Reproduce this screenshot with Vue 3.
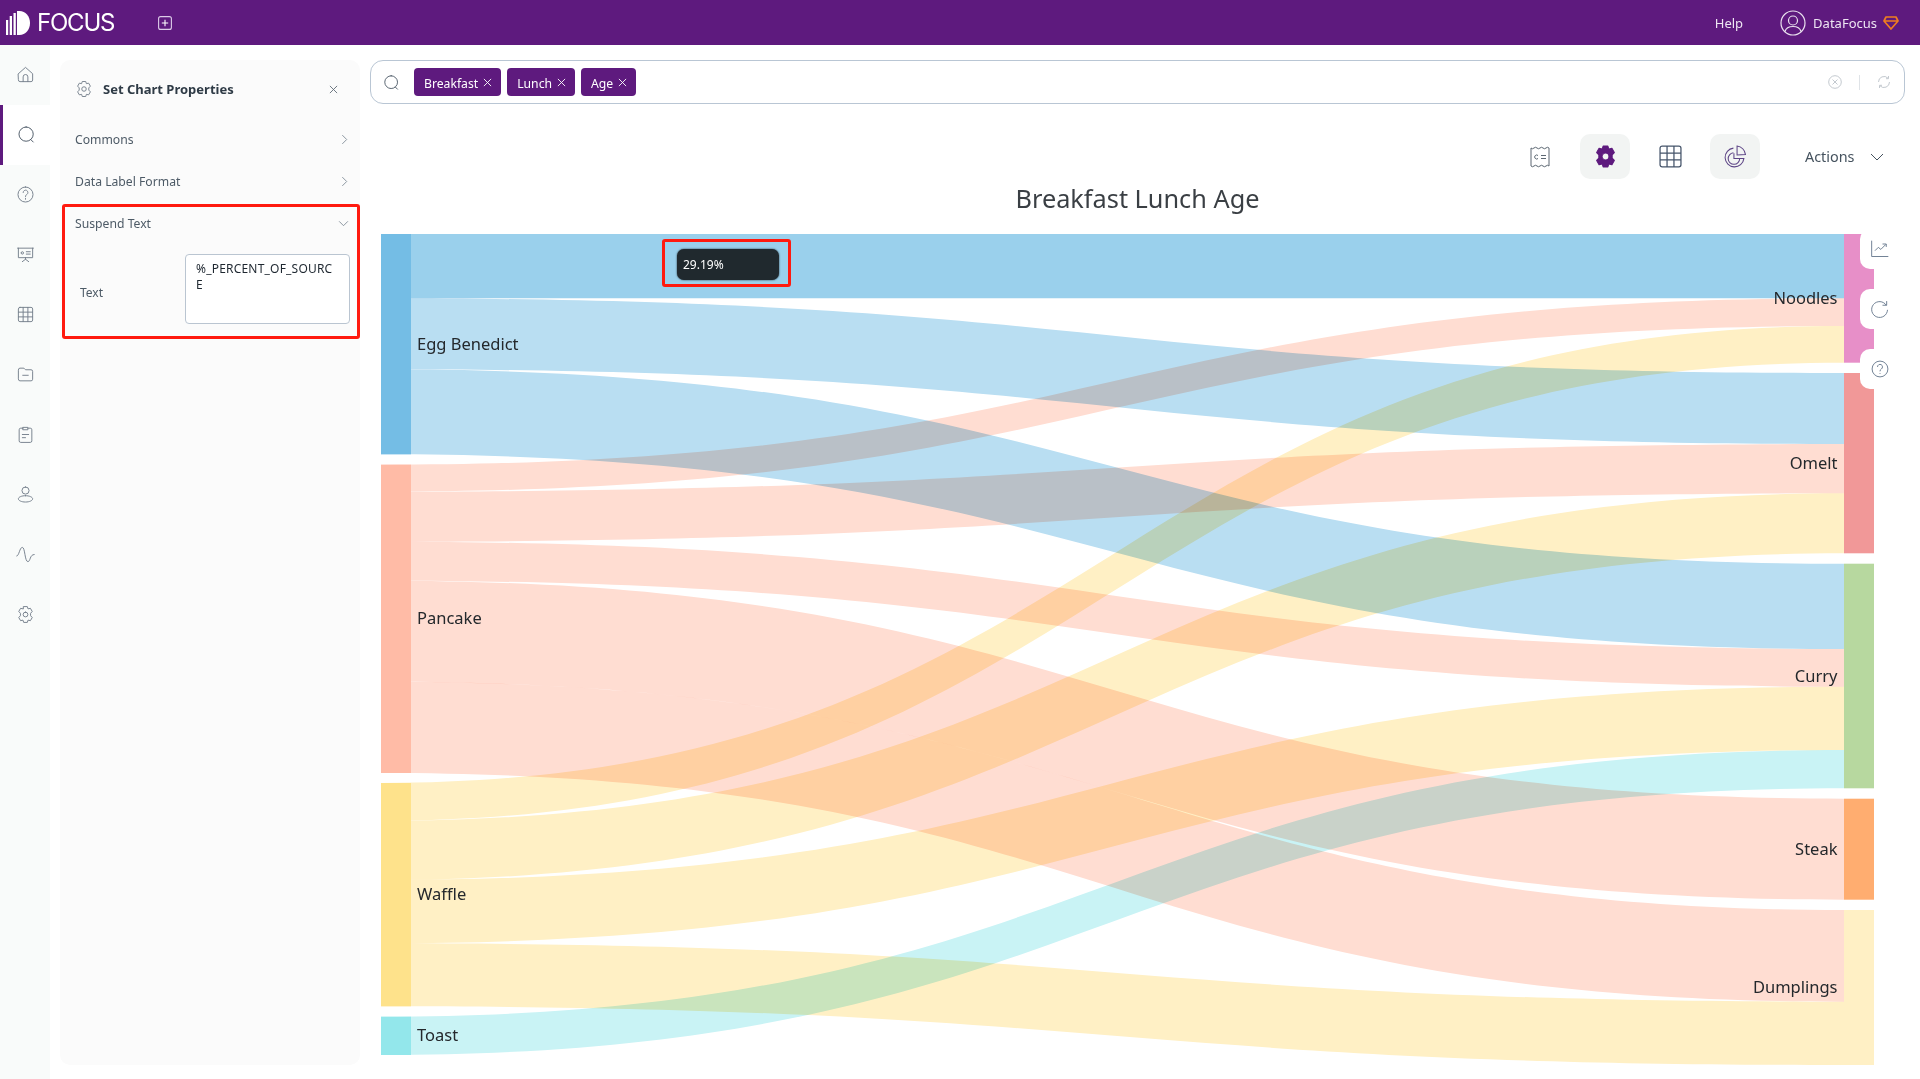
<script setup>
const X1 = 11
const X2 = 1474
const WIDTH = 1535
const TOP = 234

const colors = {
  egg: '#74bde5',
  eggLink: '#b9def2',
  pan: '#ffbba6',
  panLink: '#ffddd2',
  waf: '#fee28b',
  wafLink: '#fff0c5',
  toast: '#93e7eb',
  toastLink: '#c9f3f5'
}

const leftNodes = [
  { name: 'Egg Benedict', y0: 234, y1: 454.3, color: colors.egg },
  { name: 'Pancake', y0: 464.7, y1: 773, color: colors.pan },
  { name: 'Waffle', y0: 783, y1: 1006.3, color: colors.waf },
  { name: 'Toast', y0: 1016.7, y1: 1055, color: colors.toast }
]
const rightNodes = [
  { name: 'Noodles', y0: 234, y1: 362.7, color: '#e78fc8' },
  { name: 'Omelt', y0: 373, y1: 553.3, color: '#f19898' },
  { name: 'Curry', y0: 563.7, y1: 788.3, color: '#b7d89f' },
  { name: 'Steak', y0: 798.7, y1: 899.7, color: '#ffad70' },
  { name: 'Dumplings', y0: 910, y1: 1065, color: '#fff0c5' }
]

const MID = (X1 + X2) / 2

function linkPath([a0, a1, b0, b1]) {
  const s = [a0 - TOP, a1 - TOP, b0 - TOP, b1 - TOP]
  return `M${X1} ${s[0]}C${MID} ${s[0]} ${MID} ${s[2]} ${X2} ${s[2]}L${X2} ${s[3]}C${MID} ${s[3]} ${MID} ${s[1]} ${X1} ${s[1]}Z`
}

// The Pancake > Steak and Pancake > Dumplings ribbons touch until past the
// middle of the chart, so the top edge of the second one is sampled.
function hugPath([a0, a1, b0, b1], hugEnd) {
  const pts = []
  for (let i = 0; i <= 120; i++) {
    const t = i / 120
    const u = 1.5 * t * (1 - t) + t * t * t
    const s = 3 * t * t - 2 * t * t * t
    const q = Math.max(0, (s - 0.45) / 0.55)
    const y = a0 + (hugEnd - a0) * s + q * q * (b0 - hugEnd) - TOP
    pts.push(`${(X1 + (X2 - X1) * u).toFixed(1)} ${y.toFixed(2)}`)
  }
  return `M${pts.join('L')}L${X2} ${b1 - TOP}C${MID} ${b1 - TOP} ${MID} ${a1 - TOP} ${X1} ${a1 - TOP}Z`
}

const links = [
  { d: linkPath([234, 298.3, 234, 298.3]), fill: '#9ad0ec' },
  { d: linkPath([298.3, 369.3, 373, 444]), fill: colors.eggLink },
  { d: linkPath([369.3, 454.3, 563.7, 649]), fill: colors.eggLink },
  { d: linkPath([464.7, 491.7, 298.3, 326]), fill: colors.panLink },
  { d: linkPath([491.7, 541.7, 444, 493.3]), fill: colors.panLink },
  { d: linkPath([541.7, 580.7, 649, 686.7]), fill: colors.panLink },
  { d: linkPath([580.7, 681.7, 798.7, 899.7]), fill: colors.panLink },
  { d: hugPath([681.7, 773, 910, 1001.7], 899.7), fill: colors.panLink },
  { d: linkPath([783, 820.7, 326, 362.7]), fill: colors.wafLink },
  { d: linkPath([820.7, 880, 493.3, 553.3]), fill: colors.wafLink },
  { d: linkPath([880, 943.3, 686.7, 750]), fill: colors.wafLink },
  { d: linkPath([943.3, 1006.3, 1001.7, 1065]), fill: colors.wafLink },
  { d: linkPath([1016.7, 1055, 750, 788.3]), fill: colors.toastLink }
]

const gear = 'M9.7 2h4.6l.9 2.9 3-.7 2.3 4-2.1 2.3v3l2.1 2.3-2.3 4-3-.7-.9 2.9H9.7l-.9-2.9-3 .7-2.3-4 2.1-2.3v-3L3.500 8.200l2.300-4 3 .7z'

const navItems = [
  { d: 'M3 11 12 3l9 8v8a2 2 0 0 1-2 2H5a2 2 0 0 1-2-2zM9 21v-6a3 3 0 0 1 6 0v6' },
  { d: 'M11.500 2.500a9 9 0 1 0 0 18 9 9 0 0 0 0-18zM17.500 18.500l3 3', active: true },
  { d: 'M12 2.500a9.500 9.500 0 1 0 0 19 9.500 9.500 0 0 0 0-19zM9 9.500a3 3 0 1 1 4.600 2.500c-1 .7-1.600 1.300-1.600 2.800M12 17v1' },
  { d: 'M2 4h20M3 4v12h18V4M12 16v2M8 21l4-3 4 3M6.500 10a1.500 1.500 0 1 0 3 0 1.500 1.500 0 0 0-3 0M13 8.500h5M13 11.500h5' },
  { d: 'M5 3h14a2 2 0 0 1 2 2v14a2 2 0 0 1-2 2H5a2 2 0 0 1-2-2V5a2 2 0 0 1 2-2zM3 9h18M3 15h18M9 3v18M15 3v18' },
  { d: 'M3 6a2 2 0 0 1 2-2h5l2 2h7a2 2 0 0 1 2 2v10a2 2 0 0 1-2 2H5a2 2 0 0 1-2-2zM8.500 13h7' },
  { d: 'M9 4H6a2 2 0 0 0-2 2v14a2 2 0 0 0 2 2h12a2 2 0 0 0 2-2V6a2 2 0 0 0-2-2h-3M9 3h6v3H9zM8 12h8M8 16h4' },
  { d: 'M12 2.500a4.500 4.500 0 1 0 0 9 4.500 4.500 0 0 0 0-9zM12 13.500c-5 0-9 1.800-9 4s4 4 9 4 9-1.800 9-4-4-4-9-4z' },
  { d: 'M1 14c3 0 3.500-11 7-11s3 18 7 18c3.500 0 2-9 8-9' },
  { d: gear + 'M12 9a3 3 0 1 0 0 6 3 3 0 0 0 0-6z' }
]

const sections = ['Commons', 'Data Label Format']
const tags = ['Breakfast', 'Lunch', 'Age']
const suspendText = '%_PERCENT_OF_SOURC\nE'

const sideTabs = [
  { d: 'M2 2v19h20M6 14l4-4 3 2.500 6-6M15 6h4.500v3.500' },
  { d: 'M19.500 7.500A9.500 9.500 0 1 0 21 13M20 2.500v5h-5' },
  { d: 'M12 2.500a9.500 9.500 0 1 0 0 19 9.500 9.500 0 0 0 0-19zM9 9.500a3 3 0 1 1 4.600 2.500c-1 .7-1.600 1.300-1.600 2.800M12 17v1' }
]
</script>

<template>
  <div class="page">
    <header class="topbar">
      <div class="brand">
        <svg class="logo" viewBox="0 0 24 24" fill="#fff">
          <path d="M0 9h2.200v15H0zM3.700 5h2.300v19H3.700zM7.500 2h2.300v22H7.500z" />
          <path d="M11 0h2.500C19.500 0 24 5.400 24 12s-4.500 12-10.500 12H11z" />
        </svg>
        <span class="brand-name">FOCUS</span>
        <svg class="add" viewBox="0 0 14 14" fill="none" stroke="#dccbe8" stroke-width="1.100">
          <rect x=".6" y=".6" width="12.800" height="12.800" rx="2" />
          <path d="M7 3.800v6.400M3.800 7h6.400" stroke="#fff" />
        </svg>
      </div>
      <div class="top-right">
        <span class="help">Help</span>
        <svg class="avatar" viewBox="0 0 26 26" fill="none" stroke="#e9e1ee" stroke-width="1.200">
          <circle cx="13" cy="13" r="12" />
          <circle cx="13" cy="10.500" r="4.500" />
          <path d="M5 21.500c1-3.500 4-5 8-5s7 1.500 8 5" />
        </svg>
        <span class="user">DataFocus</span>
        <svg class="gem" viewBox="0 0 16 14" fill="none" stroke="#f07d1f" stroke-width="1.700" stroke-linejoin="round">
          <path d="M3 1h10l2 4-7 8-7-8zM1.500 5h13" />
        </svg>
      </div>
    </header>

    <div class="body">
      <nav class="sidebar">
        <div v-for="(item, i) in navItems" :key="i" class="nav-item" :class="{ active: item.active }">
          <svg class="nav-icon" viewBox="0 0 24 24" fill="none" stroke-width="1.200" stroke-linejoin="round" stroke-linecap="round">
            <path :d="item.d" />
          </svg>
        </div>
      </nav>

      <aside class="panel">
        <div class="panel-head">
          <svg class="panel-gear" viewBox="0 0 24 24" fill="none" stroke="#6f7b87" stroke-width="1.200" stroke-linejoin="round">
            <path :d="gear + 'M12 9a3 3 0 1 0 0 6 3 3 0 0 0 0-6z'" />
          </svg>
          <span class="panel-title">Set Chart Properties</span>
          <svg class="panel-close" viewBox="0 0 10 10" fill="none" stroke="#5f6b76" stroke-width="1">
            <path d="M1 1l8 8M9 1l-8 8" />
          </svg>
        </div>
        <div v-for="s in sections" :key="s" class="section">
          <span>{{ s }}</span>
          <svg class="chev" viewBox="0 0 8 12" fill="none" stroke="#7c8894" stroke-width="1">
            <path d="M1.500 1l5 5-5 5" />
          </svg>
        </div>
        <div class="open-section">
          <div class="section open">
            <span>Suspend Text</span>
            <svg class="chev-down" viewBox="0 0 12 8" fill="none" stroke="#7c8894" stroke-width="1">
              <path d="M1 1.500l5 5 5-5" />
            </svg>
          </div>
          <div class="field">
            <span class="field-label">Text</span>
            <div class="field-input">{{ suspendText }}</div>
          </div>
        </div>
      </aside>

      <main class="main">
        <div class="searchbar">
          <svg class="search-icon" viewBox="0 0 24 24" fill="none" stroke="#4c5966" stroke-width="1.300" stroke-linecap="round">
            <path d="M11.500 2.500a9 9 0 1 0 0 18 9 9 0 0 0 0-18zM17.500 18.500l3 3" />
          </svg>
          <div class="tags">
            <span v-for="t in tags" :key="t" class="tag">
              <span class="tag-text">{{ t }}</span>
              <svg class="tag-x" viewBox="0 0 10 10" fill="none" stroke="#fff" stroke-width="1">
                <path d="M1 1l8 8M9 1l-8 8" />
              </svg>
            </span>
          </div>
          <div class="search-tools">
            <svg class="tool-clear" viewBox="0 0 14 14" fill="none" stroke="#c3c9cf" stroke-width="1">
              <circle cx="7" cy="7" r="6.300" />
              <path d="M4.500 4.500l5 5M9.500 4.500l-5 5" />
            </svg>
            <span class="tool-sep"></span>
            <svg class="tool-refresh" viewBox="0 0 14 14" fill="none" stroke="#c3c9cf" stroke-width="1">
              <path d="M1.500 7A5.500 5.500 0 0 1 11 3.200M12.500 7A5.500 5.500 0 0 1 3 10.800M11.500 1v2.700H9M2.500 13v-2.700H5" />
            </svg>
          </div>
        </div>

        <div class="toolbar">
          <div class="tool">
            <svg class="tool-receipt" viewBox="0 0 20 22" fill="none" stroke="#5c6772" stroke-width="1">
              <path d="M1 2q1.500 1.500 3 0t3 0 3 0 3 0 3 0 3 0v18q-1.500-1.500-3 0t-3 0-3 0-3 0-3 0-3 0z" />
              <path d="M8 9.500a2 2 0 1 0 0 3M11 9.500h5M11 12.500h5" />
            </svg>
          </div>
          <div class="tool on">
            <svg class="tool-gear" viewBox="0 0 24 24" fill="#5e1a7e" stroke="#5e1a7e" stroke-width="1" stroke-linejoin="round" fill-rule="evenodd">
              <path :d="gear + 'M12 8.700a3.300 3.300 0 1 0 0 6.600 3.300 3.300 0 0 0 0-6.600z'" />
            </svg>
          </div>
          <div class="tool">
            <svg class="tool-grid" viewBox="0 0 22 22" fill="none" stroke="#45546a" stroke-width="1.200">
              <rect x="1" y="1" width="20" height="20" rx="2" />
              <path d="M1 7.700h20M1 14.300h20M7.700 1v20M14.300 1v20" />
            </svg>
          </div>
          <div class="tool on">
            <svg class="tool-pie" viewBox="0 0 22 22" fill="none" stroke="#5d4486" stroke-width="1">
              <path d="M9 3a9 9 0 1 0 10 10h-9.500V8" />
              <path d="M9 7.500a5.500 5.500 0 1 0 6 5.500" />
              <path d="M12.500 1a9 9 0 0 1 8 8l-8 .5z" />
            </svg>
          </div>
          <div class="actions">
            <span>Actions</span>
            <svg class="actions-chev" viewBox="0 0 14 8" fill="none" stroke="#45525e" stroke-width="1">
              <path d="M1 1l6 6 6-6" />
            </svg>
          </div>
        </div>

        <h1 class="chart-title">Breakfast Lunch Age</h1>

        <div class="chart">
          <svg class="sankey" :viewBox="`0 0 ${WIDTH} 831`">
            <path v-for="(l, i) in links" :key="i" class="link" :d="l.d" :fill="l.fill" />
            <template v-for="n in leftNodes" :key="n.name">
              <rect :x="X1" :y="n.y0 - TOP" width="30" :height="n.y1 - n.y0" :fill="n.color" />
              <text class="node-label" :x="X1 + 36" :y="(n.y0 + n.y1) / 2 - TOP - 1">{{ n.name }}</text>
            </template>
            <template v-for="n in rightNodes" :key="n.name">
              <rect :x="X2" :y="n.y0 - TOP" width="30" :height="n.y1 - n.y0" :fill="n.color" />
              <text class="node-label end" :x="X2 - 6.5" :y="(n.y0 + n.y1) / 2 - TOP - 1">{{ n.name }}</text>
            </template>
          </svg>

          <div class="callout">
            <div class="tooltip">29.19%</div>
          </div>

          <div class="side-tabs">
            <div v-for="(tab, i) in sideTabs" :key="i" class="side-tab">
              <svg class="side-icon" viewBox="0 0 24 24" fill="none" stroke="#66778c" stroke-width="1.100" stroke-linejoin="round">
                <path :d="tab.d" />
              </svg>
            </div>
          </div>
        </div>
      </main>
    </div>
  </div>
</template>

<style>
html,
body {
  margin: 0;
  background: #fff;
}
</style>

<style scoped>
.page {
  width: 1920px;
  height: 1079px;
  display: flex;
  flex-direction: column;
  overflow: hidden;
  font-family: "Noto Sans", "Open Sans", sans-serif;
  color: #4d5a66;
}

.topbar {
  height: 45px;
  flex: none;
  background: #5e1a7e;
  display: flex;
  align-items: center;
  justify-content: space-between;
  color: #fff;
}
.brand {
  display: flex;
  align-items: center;
  padding-left: 6px;
}
.logo {
  width: 24px;
  height: 24px;
}
.brand-name {
  margin-left: 7px;
  width: 78px;
  font-family: "Inter", "Noto Sans", sans-serif;
  font-size: 24px;
  font-weight: 400;
  letter-spacing: -1.2px;
}
.add {
  margin-left: 43px;
  width: 14px;
  height: 14px;
}
.top-right {
  display: flex;
  align-items: center;
  padding-right: 21px;
  font-size: 13px;
}
.help {
  color: #eee6f3;
}
.avatar {
  margin-left: 37px;
  width: 26px;
  height: 26px;
}
.user {
  margin-left: 7px;
  color: #eee6f3;
}
.gem {
  margin-left: 6px;
  width: 16px;
  height: 14px;
}

.body {
  flex: 1;
  display: flex;
  min-height: 0;
}

.sidebar {
  width: 50px;
  flex: none;
  background: #f9fbfa;
}
.nav-item {
  height: 60px;
  box-sizing: border-box;
  padding-bottom: 2px;
  display: flex;
  align-items: center;
  justify-content: center;
  stroke: #75808c;
}
.nav-item.active {
  background: #fff;
  border-left: 3px solid #5e1a7e;
  padding-right: 1px;
  stroke: #4c5966;
}
.nav-icon {
  width: 19px;
  height: 19px;
}

.panel {
  width: 300px;
  flex: none;
  margin: 15px 0 14px 10px;
  box-sizing: border-box;
  background: #fbfbfb;
  border-radius: 10px;
}
.panel-head {
  height: 58px;
  display: flex;
  align-items: center;
  padding: 0 22px 0 15px;
}
.panel-gear {
  width: 18px;
  height: 18px;
}
.panel-title {
  margin-left: 10px;
  flex: 1;
  font-size: 13px;
  font-weight: 700;
  color: #2f3b46;
}
.panel-close {
  width: 9px;
  height: 9px;
}
.section {
  height: 42px;
  box-sizing: border-box;
  display: flex;
  align-items: center;
  justify-content: space-between;
  padding: 0 12px 0 15px;
  font-size: 12.2px;
  color: #4d5a66;
}
.chev {
  width: 7px;
  height: 11px;
}
.chev-down {
  width: 11px;
  height: 7px;
}
.open-section {
  margin: 2px 0 0 2px;
  width: 298px;
  height: 135px;
  box-sizing: border-box;
  border: 3px solid #ff1a0f;
  border-radius: 3px;
}
.open-section .section {
  height: 33px;
  padding: 0 8px 0 10px;
}
.field {
  display: flex;
  align-items: center;
  padding-left: 15px;
  margin-top: 14px;
}
.field-label {
  width: 105px;
  flex: none;
  padding-top: 6px;
  font-size: 12px;
  color: #4d5a66;
}
.field-input {
  width: 165px;
  height: 70px;
  box-sizing: border-box;
  padding: 6px 10px;
  border: 1px solid #bac5d1;
  border-radius: 4px;
  background: #fff;
  font-size: 12px;
  line-height: 16px;
  letter-spacing: 0.2px;
  color: #1e2730;
  white-space: pre-wrap;
}

.main {
  flex: 1;
  min-width: 0;
  display: flex;
  flex-direction: column;
  padding: 15px 15px 0 10px;
}
.searchbar {
  height: 44px;
  flex: none;
  box-sizing: border-box;
  border: 1px solid #b9c6d4;
  border-radius: 13px;
  display: flex;
  align-items: center;
  padding: 0 13px 0 12px;
}
.search-icon {
  width: 17px;
  height: 17px;
}
.tags {
  flex: 1;
  display: flex;
  gap: 6px;
  margin-left: 14px;
}
.tag {
  height: 28px;
  display: flex;
  align-items: center;
  gap: 5px;
  padding: 0 9px 0 10px;
  background: #5e1a7e;
  border-radius: 4px;
  color: #fff;
  font-size: 12.2px;
}
.tag-text {
  padding-top: 2px;
}
.tag-x {
  width: 9px;
  height: 9px;
}
.search-tools {
  display: flex;
  align-items: center;
}
.tool-clear {
  width: 14px;
  height: 14px;
}
.tool-sep {
  width: 1px;
  height: 15px;
  margin: 0 17px;
  background: #dfe3e7;
}
.tool-refresh {
  width: 14px;
  height: 14px;
}

.toolbar {
  height: 45px;
  flex: none;
  margin-top: 30px;
  display: flex;
  justify-content: flex-end;
  align-items: center;
  gap: 15px;
  padding-right: 21px;
}
.tool {
  width: 50px;
  height: 45px;
  border-radius: 10px;
  display: flex;
  align-items: center;
  justify-content: center;
}
.tool.on {
  background: #f2f4f3;
}
.tool-receipt {
  width: 20px;
  height: 22px;
}
.tool-gear {
  width: 25px;
  height: 25px;
}
.tool-grid {
  width: 23px;
  height: 23px;
}
.tool-pie {
  width: 23px;
  height: 23px;
}
.actions {
  width: 79px;
  margin-left: 30px;
  display: flex;
  align-items: center;
  justify-content: space-between;
  font-size: 14.4px;
  color: #45525e;
}
.actions-chev {
  width: 14px;
  height: 8px;
}

.chart-title {
  margin: 0;
  height: 55px;
  flex: none;
  box-sizing: border-box;
  padding-bottom: 18px;
  display: flex;
  align-items: center;
  justify-content: center;
  font-size: 25.3px;
  font-weight: 400;
  color: #3a3f44;
}

.chart {
  position: relative;
  flex: none;
  height: 831px;
}
.sankey {
  display: block;
  width: 1535px;
  height: 831px;
  overflow: visible;
}
.link {
  mix-blend-mode: multiply;
}
.node-label {
  font-size: 16.5px;
  fill: #24282c;
  dominant-baseline: central;
}
.node-label.end {
  text-anchor: end;
}

.callout {
  position: absolute;
  left: 292px;
  top: 5px;
  width: 129px;
  height: 48px;
  box-sizing: border-box;
  border: 3px solid #ff1a0f;
  border-radius: 3px;
  padding: 7px 9px 7px 12px;
}
.tooltip {
  height: 31px;
  box-sizing: border-box;
  padding: 0 6px;
  display: flex;
  align-items: center;
  border-radius: 7px;
  background: #20292e;
  box-shadow: 0 0 2px #20292e;
  color: #fff;
  font-size: 12px;
}

.side-tabs {
  position: absolute;
  left: 1490px;
  top: -5px;
  display: flex;
  flex-direction: column;
  gap: 20px;
}
.side-tab {
  width: 60px;
  height: 40px;
  display: flex;
  align-items: center;
  padding-left: 10px;
  box-sizing: border-box;
  background: #fff;
  border-radius: 10px 0 0 10px;
}
.side-icon {
  width: 20px;
  height: 20px;
}
</style>
